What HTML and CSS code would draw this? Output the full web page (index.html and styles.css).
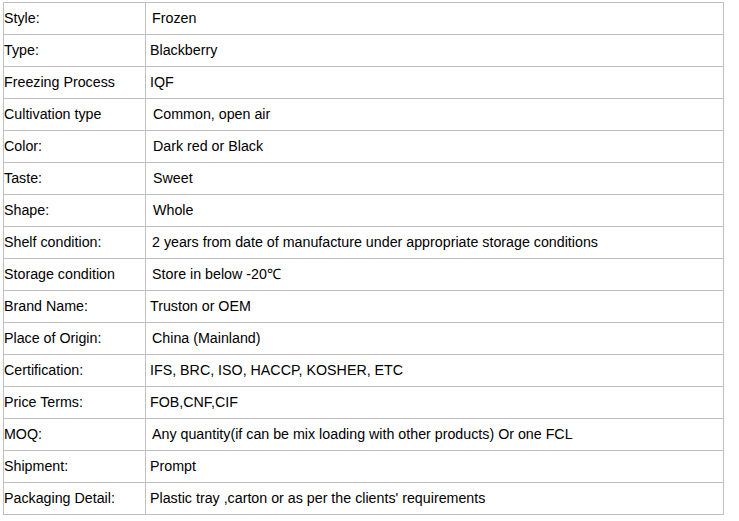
FILE: index.html
```html
<!DOCTYPE html>
<html>
<head>
<meta charset="utf-8">
<link rel="stylesheet" href="styles.css">
</head>
<body>
<table class="spec">
<tr><td class="k">Style:</td><td class="v v2">Frozen</td></tr>
<tr><td class="k">Type:</td><td class="v">Blackberry</td></tr>
<tr><td class="k">Freezing Process</td><td class="v">IQF</td></tr>
<tr><td class="k">Cultivation type</td><td class="v v3">Common, open air</td></tr>
<tr><td class="k">Color:</td><td class="v v3">Dark red or Black</td></tr>
<tr><td class="k">Taste:</td><td class="v v3">Sweet</td></tr>
<tr><td class="k">Shape:</td><td class="v v3">Whole</td></tr>
<tr><td class="k">Shelf condition:</td><td class="v v2">2 years from date of manufacture under appropriate storage conditions</td></tr>
<tr><td class="k">Storage condition</td><td class="v v2">Store in below -20℃</td></tr>
<tr><td class="k">Brand Name:</td><td class="v">Truston or OEM</td></tr>
<tr><td class="k">Place of Origin:</td><td class="v v2">China (Mainland)</td></tr>
<tr><td class="k">Certification:</td><td class="v">IFS, BRC, ISO, HACCP, KOSHER, ETC</td></tr>
<tr><td class="k">Price Terms:</td><td class="v">FOB,CNF,CIF</td></tr>
<tr><td class="k">MOQ:</td><td class="v v2">Any quantity(if can be mix loading with other products) Or one FCL</td></tr>
<tr><td class="k">Shipment:</td><td class="v">Prompt</td></tr>
<tr><td class="k">Packaging Detail:</td><td class="v">Plastic tray ,carton or as per the clients' requirements</td></tr>
</table>
</body>
</html>
```
FILE: styles.css
```css
html, body {
  margin: 0;
  padding: 0;
  background: #ffffff;
}
body {
  padding: 2px 0 0 3px;
  font-family: "Liberation Sans", Arial, sans-serif;
  font-size: 14.25px;
  color: #000000;
}
.spec {
  border-collapse: collapse;
  width: 721px;
  table-layout: fixed;
}
.spec td {
  border: 1px solid #c0c0c0;
  height: 29px;
  padding: 0 0 2px 0;
  vertical-align: middle;
  white-space: nowrap;
}
.spec td.k {
  width: 141px;
  padding-left: 0;
}
.spec td.v {
  padding-left: 4px;
}
.spec td.v2 {
  padding-left: 6px;
}
.spec td.v3 {
  padding-left: 7px;
}
```
